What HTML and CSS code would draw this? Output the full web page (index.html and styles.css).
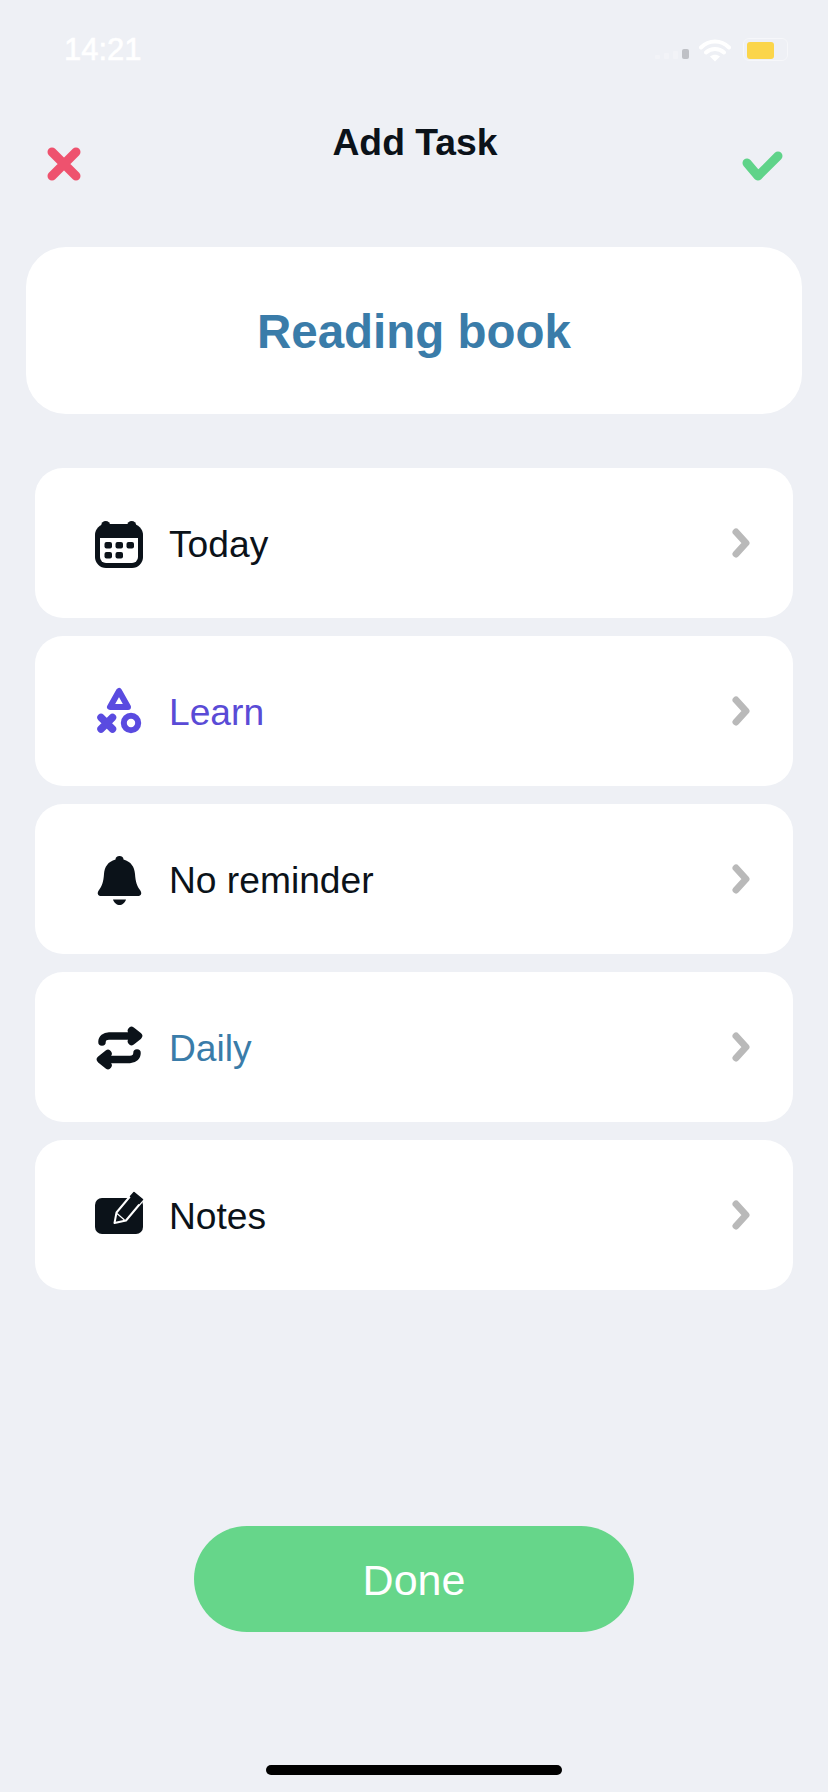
FILE: index.html
```html
<!DOCTYPE html>
<html lang="en">
<head>
<meta charset="utf-8">
<title>Add Task</title>
<link rel="stylesheet" href="styles.css">
</head>
<body>
<main class="screen">
  <div class="status">
    <span class="time">14:21</span>
    <div class="status-icons">
      <svg class="signal" width="34" height="12" viewBox="0 0 34 12"><rect x="0" y="8" width="5" height="4" rx="1" fill="#f2f3f7"/><rect x="9" y="6" width="5" height="6" rx="1" fill="#f2f3f7"/><rect x="18" y="4" width="5" height="8" rx="1" fill="#f2f3f7"/><rect x="27" y="2" width="7" height="10" rx="2" fill="#bfc1c6"/></svg>
      <svg class="wifi" width="32" height="24" viewBox="0 0 32 24"><path d="M2 9.500C10 1.500 22 1.500 30 9.500M7 14.500C12 9.800 20 9.800 25 14.500" fill="none" stroke="#fff" stroke-width="4" stroke-linecap="round"/><path d="M11 18.500C14 16 18 16 21 18.500L16 23.500Z" fill="#fff"/></svg>
      <div class="battery"><div class="battery-fill"></div></div>
    </div>
  </div>

  <header class="header">
    <svg class="close" width="34" height="34" viewBox="0 0 34 34"><path d="M5 5L29 29M29 5L5 29" fill="none" stroke="#ee526e" stroke-width="9" stroke-linecap="round"/></svg>
    <h1 class="heading">Add Task</h1>
    <svg class="confirm" width="41" height="30" viewBox="0 0 41 30"><path d="M5 12L16 25L36 5" fill="none" stroke="#5fd389" stroke-width="9" stroke-linecap="round" stroke-linejoin="round"/></svg>
  </header>

  <section class="title-card">Reading book</section>

  <section class="list">
    <div class="row">
      <svg class="icon" width="48" height="52" viewBox="0 0 48 52">
        <circle cx="10.700" cy="8.500" r="4.500" fill="#0b1219"/><circle cx="36.700" cy="8.500" r="4.500" fill="#0b1219"/>
        <rect x="0" y="7" width="48" height="44" rx="11" fill="#0b1219"/>
        <path d="M5 21H43V40A6 6 0 0 1 37 46H11A6 6 0 0 1 5 40Z" fill="#fff"/>
        <g fill="#0b1219"><rect x="9.500" y="25" width="7.500" height="6.500" rx="2"/><rect x="20.500" y="25" width="7.500" height="6.500" rx="2"/><rect x="31.500" y="25" width="7.500" height="6.500" rx="2"/><rect x="9.500" y="35" width="7.500" height="6.500" rx="2"/><rect x="20.500" y="35" width="7.500" height="6.500" rx="2"/></g>
      </svg>
      <span class="label">Today</span>
      <svg class="chevron" width="18" height="30" viewBox="0 0 18 30"><path d="M4 4L14 15L4 26" fill="none" stroke="#b9b9b9" stroke-width="7" stroke-linecap="round" stroke-linejoin="round"/></svg>
    </div>
    <div class="row">
      <svg class="icon" width="48" height="52" viewBox="0 0 48 52">
        <path d="M24 6L15 22H33Z" fill="none" stroke="#5a4be0" stroke-width="6" stroke-linejoin="round"/>
        <path d="M6 32.500L17.500 44M17.500 32.500L6 44" fill="none" stroke="#5a4be0" stroke-width="7.500" stroke-linecap="round"/>
        <circle cx="36" cy="38" r="7.200" fill="none" stroke="#5a4be0" stroke-width="6"/>
      </svg>
      <span class="label label-purple">Learn</span>
      <svg class="chevron" width="18" height="30" viewBox="0 0 18 30"><path d="M4 4L14 15L4 26" fill="none" stroke="#b9b9b9" stroke-width="7" stroke-linecap="round" stroke-linejoin="round"/></svg>
    </div>
    <div class="row">
      <svg class="icon" width="48" height="52" viewBox="0 0 48 52">
        <path d="M24.500 3C27 3 28.500 4.500 28.500 6.500C36 8.500 39.500 14 40 21C40.500 29 42 33 45 37C47.500 40.500 46 43 43 43H6C3 43 1.500 40.500 4 37C7 33 8.500 29 9 21C9.500 14 13 8.500 20.500 6.500C20.500 4.500 22 3 24.500 3Z" fill="#0b1219"/>
        <path d="M18 46.500H31C30 50 27 52 24.500 52C22 52 19 50 18 46.500Z" fill="#0b1219"/>
      </svg>
      <span class="label">No reminder</span>
      <svg class="chevron" width="18" height="30" viewBox="0 0 18 30"><path d="M4 4L14 15L4 26" fill="none" stroke="#b9b9b9" stroke-width="7" stroke-linecap="round" stroke-linejoin="round"/></svg>
    </div>
    <div class="row">
      <svg class="icon" width="48" height="52" viewBox="0 0 48 52">
        <path d="M7 21C7 17.500 10 15 14 15H41M36.500 9.500L43.500 15L36.500 20.500M42 32C42 35.500 39 38.500 35 38.500H8M13 32.500L5.500 38.500L13 44.500" fill="none" stroke="#0b1219" stroke-width="7.500" stroke-linecap="round" stroke-linejoin="round"/>
      </svg>
      <span class="label label-blue">Daily</span>
      <svg class="chevron" width="18" height="30" viewBox="0 0 18 30"><path d="M4 4L14 15L4 26" fill="none" stroke="#b9b9b9" stroke-width="7" stroke-linecap="round" stroke-linejoin="round"/></svg>
    </div>
    <div class="row">
      <svg class="icon" width="48" height="52" viewBox="0 0 48 52">
        <rect x="0" y="9" width="48" height="36" rx="7" fill="#0b1219"/>
        <path d="M19.500 34L21.500 23.500L37 5L46.500 13L31 31.500Z" fill="#0b1219" stroke="#fff" stroke-width="2" stroke-linejoin="round"/>
        <path d="M39 3.500L47.500 10.500L44 14.500L35.500 7.500Z" fill="#0b1219" stroke="#0b1219" stroke-width="1.500" stroke-linejoin="round"/>
        <path d="M22 24.500L29.500 31" fill="none" stroke="#fff" stroke-width="1.200"/>
      </svg>
      <span class="label">Notes</span>
      <svg class="chevron" width="18" height="30" viewBox="0 0 18 30"><path d="M4 4L14 15L4 26" fill="none" stroke="#b9b9b9" stroke-width="7" stroke-linecap="round" stroke-linejoin="round"/></svg>
    </div>
  </section>

  <button class="done" type="button">Done</button>
  <div class="home-bar"></div>
</main>
</body>
</html>
```

FILE: styles.css
```css
* { box-sizing: border-box; }
html, body { margin: 0; padding: 0; }
body {
  background: #eef0f5;
  font-family: "Liberation Sans", Arial, sans-serif;
  color: #0b1219;
}
.screen {
  width: 828px;
  height: 1792px;
  display: flex;
  flex-direction: column;
  overflow: hidden;
}
.status {
  height: 90px;
  padding: 32px 40px 0 64px;
  display: flex;
  justify-content: space-between;
  align-items: flex-start;
}
.time {
  font-size: 31px;
  line-height: 36px;
  color: #fff;
  -webkit-text-stroke: 0.6px #fff;
}
.status-icons {
  display: flex;
  align-items: flex-start;
  margin-top: 6px;
}
.signal { margin: 9px 10px 0 0; }
.wifi { margin-right: 12px; }
.battery {
  width: 45px;
  height: 23px;
  padding: 3px;
  border: 1px solid #f6f7fa;
  border-radius: 6px;
}
.battery-fill {
  width: 27px;
  height: 17px;
  background: #fbd54a;
  border-radius: 3px;
}
.header {
  height: 157px;
  display: grid;
  grid-template-columns: 1fr auto 1fr;
  align-items: start;
  padding: 0 45px 0 47px;
}
.close { margin-top: 57px; }
.confirm { margin-top: 61px; justify-self: end; }
.heading {
  margin: 30px 0 0;
  font-size: 37.300px;
  line-height: 44px;
  font-weight: 700;
}
.title-card {
  margin: 0 26px;
  height: 167px;
  padding-top: 2px;
  background: #fff;
  border-radius: 40px;
  display: flex;
  align-items: center;
  justify-content: center;
  color: #3a7ca9;
  font-size: 47.500px;
  font-weight: 700;
}
.list {
  margin: 54px 35px 0;
  display: flex;
  flex-direction: column;
  gap: 18px;
}
.row {
  height: 150px;
  background: #fff;
  border-radius: 28px;
  display: flex;
  align-items: center;
  padding: 0 43px 0 60px;
}
.icon { flex: none; overflow: visible; }
.label {
  flex: 1;
  margin: 2px 0 0 26px;
  font-size: 37.200px;
  line-height: 44px;
}
.label-purple { color: #5a4bd6; }
.label-blue { color: #3a7ca9; }
.chevron { flex: none; }
.done {
  margin: 236px auto 0;
  width: 440px;
  height: 106px;
  padding: 2px 0 0;
  border: 0;
  border-radius: 53px;
  background: #66d68a;
  color: #fff;
  font-family: inherit;
  font-size: 43px;
}
.home-bar {
  margin: 133px auto 0;
  width: 296px;
  height: 10px;
  border-radius: 5px;
  background: #000;
}
```
